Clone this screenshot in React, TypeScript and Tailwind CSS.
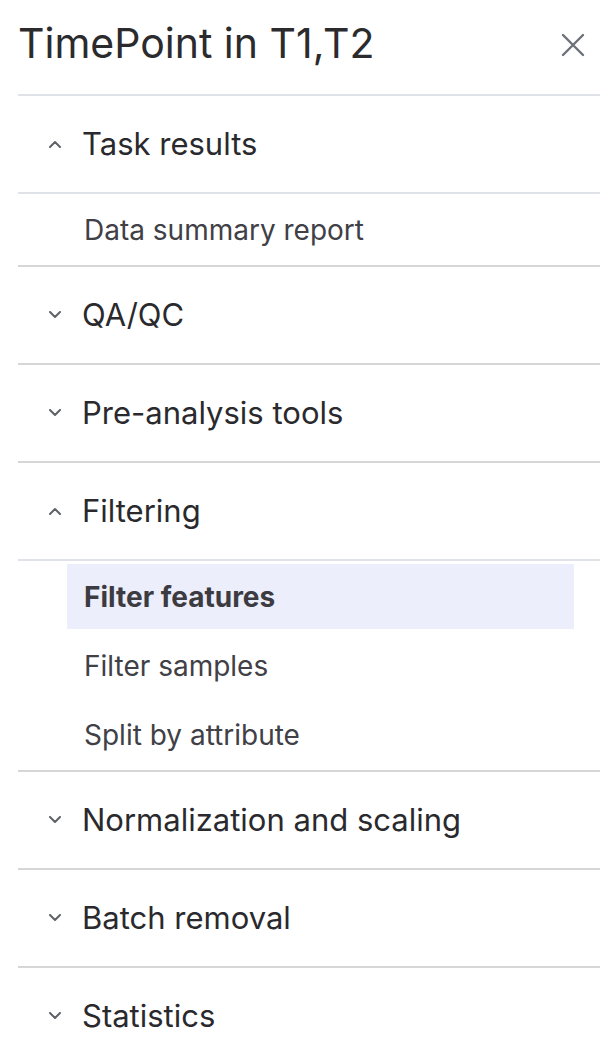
import { useState } from "react";

type Section = {
  title: string;
  items?: string[];
  open?: boolean;
};

const sections: Section[] = [
  { title: "Task results", items: ["Data summary report"], open: true },
  { title: "QA/QC" },
  { title: "Pre-analysis tools" },
  { title: "Filtering", items: ["Filter features", "Filter samples", "Split by attribute"], open: true },
  { title: "Normalization and scaling" },
  { title: "Batch removal" },
  { title: "Statistics" },
];

function Chevron({ up }: { up: boolean }) {
  return (
    <svg width="14" height="8" viewBox="0 0 14 8" fill="none" className="text-[#5f6368]">
      {up ? (
        <path d="M2 7 L7 2 L12 7" stroke="currentColor" strokeWidth="2" strokeLinecap="round" strokeLinejoin="round" />
      ) : (
        <path d="M2 1 L7 6 L12 1" stroke="currentColor" strokeWidth="2" strokeLinecap="round" strokeLinejoin="round" />
      )}
    </svg>
  );
}

export default function App() {
  const [active, setActive] = useState("Filter features");

  return (
    <div className="w-[600px] h-[1040px] overflow-hidden bg-white pl-[18px] font-['Inter','Noto_Sans',sans-serif]">
      <div className="h-[94px] flex items-center justify-between pr-[15px] border-b-2 border-[#dfe3e8] box-content">
        <h1 className="text-[41px] leading-none text-[#2b2b2e] -mt-[8px]">TimePoint in T1,T2</h1>
        <button className="w-[24px] h-[24px] -mt-[4px] flex items-center justify-center text-[#6b7079]">
          <svg width="24" height="24" viewBox="0 0 24 24" fill="none">
            <path d="M2 2 L22 22 M22 2 L2 22" stroke="currentColor" strokeWidth="2.4" strokeLinecap="round" />
          </svg>
        </button>
      </div>

      {sections.map((s) => (
        <div key={s.title}>
          <div
            className={`h-[96px] flex items-center box-content border-b-2 ${
              s.open ? "border-[#dfe3e8]" : "border-[#d6d6d6]"
            }`}
          >
            <div className="w-[64px] pl-[30px] flex items-center">
              <Chevron up={!!s.open} />
            </div>
            <span className="text-[31px] leading-none text-[#2a2a2e] -mt-[2px]">{s.title}</span>
          </div>
          {s.open && s.items && (
            <div className="flex flex-col gap-[4px] pt-[3px] pb-[3px] border-b-2 border-[#d6d6d6] box-content">
              {s.items.map((it) => (
                <button
                  key={it}
                  onClick={() => setActive(it)}
                  className={`ml-[49px] w-[507px] h-[65px] px-[17px] flex items-center text-left text-[28px] leading-none ${
                    active === it ? "bg-[#eceefb] font-bold text-[#3c3b42]" : "text-[#404046]"
                  }`}
                >
                  {it}
                </button>
              ))}
            </div>
          )}
        </div>
      ))}
    </div>
  );
}
